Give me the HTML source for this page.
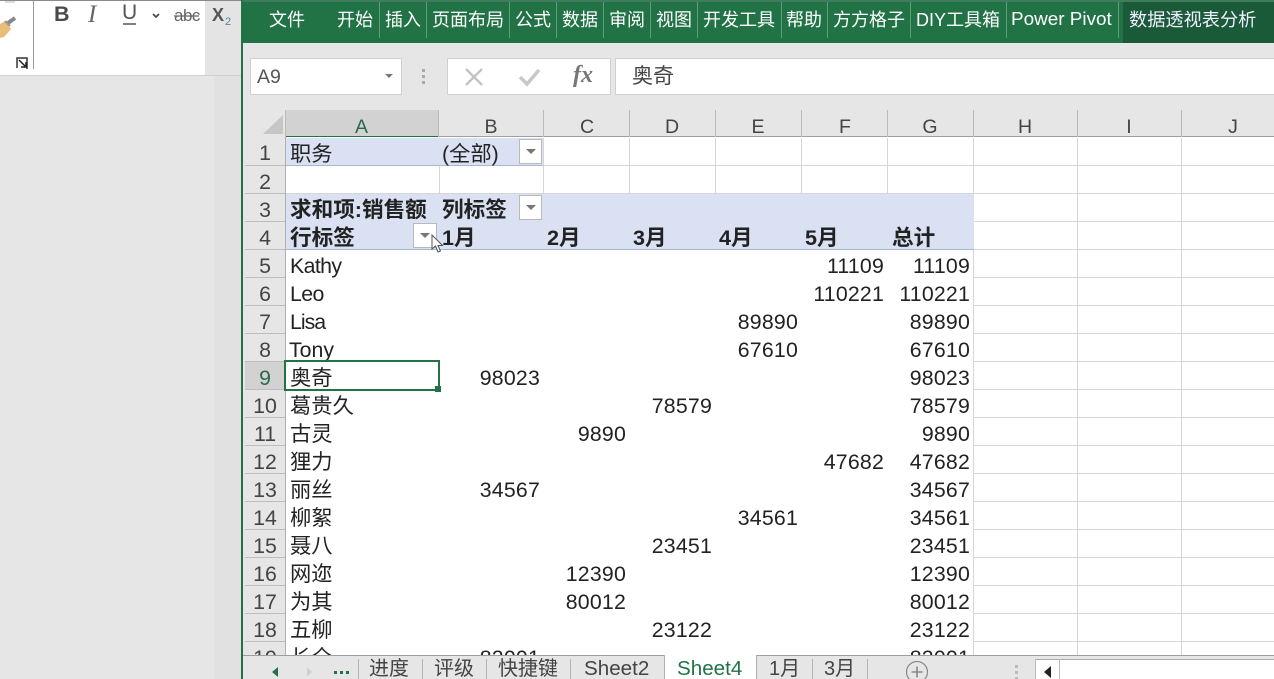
<!DOCTYPE html>
<html lang="zh"><head><meta charset="utf-8"><style>
html,body{margin:0;padding:0;width:1274px;height:679px;overflow:hidden;background:#e6e6e6}
body{position:relative;font-family:"Liberation Sans","Noto Sans CJK SC",sans-serif;color:#333}
div,span{position:absolute;white-space:nowrap}
.t{color:#fff;font-size:18px;line-height:24px;top:8px}
.sep{top:2px;width:1px;height:36px;background:#5f9c7d}
.ch{top:114px;height:26px;line-height:27px;font-size:19.5px;color:#444;text-align:center}
.cs{top:110px;width:1px;height:28px;background:#bbb}
.rh{left:245px;width:40px;height:28px;line-height:31px;margin-top:1px;text-align:center;font-size:21.3px;color:#444}
.rl{left:245px;width:40px;height:1px;background:#bdbdbd}
.c{font-size:21.3px;line-height:28px;height:28px;color:#222;margin-top:-1px}
.n{font-size:21.3px;line-height:28px;height:28px;color:#222;text-align:right;letter-spacing:.2px;margin-top:-1px}
.h{font-weight:bold;font-size:21.6px}
.lat{letter-spacing:-.6px}
.dd{width:23px;height:25px;background:#fff;border:1px solid #b9b9b9;box-sizing:border-box}
.dd:after{content:"";position:absolute;left:6px;top:9px;border:5px solid transparent;border-top:5px solid #777;border-bottom:0}
.tab{top:655px;font-size:20px;line-height:28px;color:#444}
.ts{top:659px;width:1px;height:20px;background:#b5b5b5}
</style></head><body>

<!-- left panel -->
<div style="left:0;top:0;width:205px;height:75px;background:#fff"></div>
<div style="left:205px;top:0;width:37px;height:75px;background:#e4e4e4"></div>
<div style="left:0;top:0;width:242px;height:1px;background:#8a8a8a"></div>
<div style="left:0;top:75px;width:242px;height:1px;background:#d0d0d0"></div>
<div style="left:214px;top:76px;width:28px;height:603px;background:#e1e1e1"></div>
<div style="left:33px;top:1px;width:1px;height:68px;background:#9a9a9a"></div>
<svg style="position:absolute;left:0;top:0" width="242" height="76">
<path d="M5 2H15" stroke="#bbb" stroke-width="1"/>
<path d="M0 24L5 21L11 29L4 37L0 38Z" fill="#e8bd77"/><path d="M5 21L10 26" stroke="#999" stroke-width="2"/>
<path d="M8 23L15 18" stroke="#888" stroke-width="4"/>
<path d="M27 69V58H17V68" fill="none" stroke="#333" stroke-width="1.5"/><path d="M19 60L26 67M26 62V67H21" fill="none" stroke="#222" stroke-width="1.5"/>
<path d="M153 14L156 17L159 14" fill="none" stroke="#444" stroke-width="1.6"/>
<path d="M174 16H199" stroke="#666" stroke-width="1.2"/>
<path d="M123 24H136" stroke="#555" stroke-width="1.5"/>
</svg>
<div style="left:54px;top:0;font:bold 21.5px/29px 'Liberation Sans',sans-serif;color:#4a4a4a">B</div>
<div style="left:88px;top:0;font:italic 25px/29px 'Liberation Serif',serif;color:#666">I</div>
<div style="left:122px;top:0;font:21px/26px 'Liberation Sans',sans-serif;color:#555">U</div>
<div style="left:174px;top:3px;font:17px/26px 'Liberation Sans',sans-serif;color:#666;letter-spacing:-.5px">abc</div>
<div style="left:212px;top:1px;font:bold 18px/28px 'Liberation Sans',sans-serif;color:#555">X</div>
<div style="left:225px;top:12px;font:11px/20px 'Liberation Sans',sans-serif;color:#5b7fa8">2</div>

<!-- window -->
<div style="left:241px;top:0;width:2px;height:679px;background:#217346"></div>
<div style="left:243px;top:1px;width:1031px;height:42px;background:#217346"></div>
<div style="left:243px;top:0;width:1031px;height:2px;background:#3f7d5e"></div>
<div style="left:1123px;top:2px;width:151px;height:41px;background:#1b5a38"></div>
<div class="t" style="left:269px">文件</div>
<div class="t" style="left:337px">开始</div><div class="sep" style="left:379px"></div>
<div class="t" style="left:385px">插入</div><div class="sep" style="left:426px"></div>
<div class="t" style="left:432px">页面布局</div><div class="sep" style="left:509px"></div>
<div class="t" style="left:515px">公式</div><div class="sep" style="left:556px"></div>
<div class="t" style="left:562px">数据</div><div class="sep" style="left:603px"></div>
<div class="t" style="left:609px">审阅</div><div class="sep" style="left:650px"></div>
<div class="t" style="left:656px">视图</div><div class="sep" style="left:697px"></div>
<div class="t" style="left:703px">开发工具</div><div class="sep" style="left:781px"></div>
<div class="t" style="left:786px">帮助</div><div class="sep" style="left:827px"></div>
<div class="t" style="left:833px">方方格子</div>
<div class="sep" style="left:910px"></div>
<div class="t" style="left:916px">DIY工具箱</div><div class="sep" style="left:1006px"></div>
<div class="t" style="left:1011px;font-size:18.9px">Power Pivot</div><div class="sep" style="left:1118px"></div>
<div class="t" style="left:1129px;color:#eef;font-size:18.2px">数据透视表分析</div>

<!-- formula bar -->
<div style="left:250px;top:58px;width:152px;height:37px;background:#fff;border:1px solid #d0d0d0;box-sizing:border-box"></div>
<div style="left:257px;top:64px;font-size:19.5px;line-height:26px;color:#555">A9</div>
<div style="left:385px;top:74px;border:4px solid transparent;border-top:4px solid #777;border-bottom:0"></div>
<div style="left:422px;top:69px;width:3px;height:3px;background:#aaa;box-shadow:0 6px #aaa,0 12px #aaa"></div>
<div style="left:447px;top:58px;width:164px;height:37px;background:#fff;border:1px solid #d0d0d0;box-sizing:border-box"></div>
<svg style="position:absolute;left:447px;top:58px" width="164" height="37">
<path d="M19 11L35 27M35 11L19 27" stroke="#c4c4c4" stroke-width="2.4"/>
<path d="M73 19L80 26L92 12" fill="none" stroke="#c8c8c8" stroke-width="3.5"/>
</svg>
<div style="left:573px;top:62px;font:italic bold 24px/27px 'Liberation Serif',serif;color:#777">fx</div>
<div style="left:615px;top:58px;width:665px;height:37px;background:#fff;border:1px solid #d0d0d0;box-sizing:border-box"></div>
<div style="left:632px;top:63px;font-size:21px;line-height:27px;color:#444">奥奇</div>

<!-- column header -->
<svg style="position:absolute;left:245px;top:110px" width="40" height="28"><path d="M38 5V24H18Z" fill="#c6c6c6"/></svg>
<div style="left:286px;top:110px;width:153px;height:26px;background:#d2d2d2"></div>
<div style="left:286px;top:136px;width:153px;height:2px;background:#217346"></div>
<div style="left:439px;top:136px;width:835px;height:1px;background:#9f9f9f"></div>
<div class="cs" style="left:285px"></div><div class="cs" style="left:438px"></div><div class="cs" style="left:543px"></div><div class="cs" style="left:629px"></div><div class="cs" style="left:715px"></div><div class="cs" style="left:801px"></div><div class="cs" style="left:887px"></div><div class="cs" style="left:973px"></div><div class="cs" style="left:1077px"></div><div class="cs" style="left:1181px"></div>
<div class="ch" style="left:285px;width:153px;color:#2a6a49">A</div>
<div class="ch" style="left:439px;width:104px">B</div><div class="ch" style="left:544px;width:86px">C</div><div class="ch" style="left:629px;width:86px">D</div><div class="ch" style="left:715px;width:86px">E</div><div class="ch" style="left:802px;width:86px">F</div><div class="ch" style="left:887px;width:86px">G</div><div class="ch" style="left:973px;width:104px">H</div><div class="ch" style="left:1077px;width:104px">I</div><div class="ch" style="left:1181px;width:104px">J</div>

<!-- sheet -->
<div style="left:285px;top:137px;width:989px;height:518px;background:#fff"></div>
<div style="left:285px;top:137px;width:1px;height:518px;background:#b0b0b0"></div>
<!-- pivot fills -->
<div style="left:286px;top:138px;width:257px;height:27px;background:#d9e1f2"></div>
<div style="left:286px;top:194px;width:688px;height:55px;background:#d9e1f2"></div>
<div style="left:286px;top:249px;width:688px;height:1px;background:#a9b7d6"></div>
<div style="left:286px;top:165px;width:257px;height:1px;background:#a9b7d6"></div>
<!-- gridlines -->
<svg style="position:absolute;left:0;top:0" width="1274" height="679">
<g stroke="#d6d6d6" stroke-width="1" shape-rendering="crispEdges">
<path d="M439.5 166V193M543.5 138V193M629.5 138V193M715.5 138V193M801.5 138V193M887.5 138V193M973.5 138V193"/>
<path d="M543 165.5H974M286 193.5H974"/>
<path d="M973.5 250V655M1077.5 138V655M1181.5 138V655"/>
<path d="M974 165.5H1274M974 193.5H1274M974 221.5H1274M974 249.5H1274M974 277.5H1274M974 305.5H1274M974 333.5H1274M974 361.5H1274M974 389.5H1274M974 417.5H1274M974 445.5H1274M974 473.5H1274M974 501.5H1274M974 529.5H1274M974 557.5H1274M974 585.5H1274M974 613.5H1274M974 641.5H1274"/>
</g></svg>
<!-- row headers -->
<div class="rh" style="top:137px">1</div><div class="rh" style="top:166px">2</div><div class="rh" style="top:194px">3</div><div class="rh" style="top:222px">4</div><div class="rh" style="top:250px">5</div><div class="rh" style="top:278px">6</div><div class="rh" style="top:306px">7</div><div class="rh" style="top:334px">8</div>
<div style="left:245px;top:362px;width:40px;height:28px;background:#d2d2d2"></div>
<div class="rh" style="top:362px;color:#2a6a49">9</div><div class="rh" style="top:390px">10</div><div class="rh" style="top:418px">11</div><div class="rh" style="top:446px">12</div><div class="rh" style="top:474px">13</div><div class="rh" style="top:502px">14</div><div class="rh" style="top:530px">15</div><div class="rh" style="top:558px">16</div><div class="rh" style="top:586px">17</div><div class="rh" style="top:614px">18</div><div class="rh" style="top:642px">19</div>
<div class="rl" style="top:165px"></div><div class="rl" style="top:193px"></div><div class="rl" style="top:221px"></div><div class="rl" style="top:249px"></div><div class="rl" style="top:277px"></div><div class="rl" style="top:305px"></div><div class="rl" style="top:333px"></div><div class="rl" style="top:361px"></div><div class="rl" style="top:389px"></div><div class="rl" style="top:417px"></div><div class="rl" style="top:445px"></div><div class="rl" style="top:473px"></div><div class="rl" style="top:501px"></div><div class="rl" style="top:529px"></div><div class="rl" style="top:557px"></div><div class="rl" style="top:585px"></div><div class="rl" style="top:613px"></div><div class="rl" style="top:641px"></div>

<!-- cells -->
<div class="c" style="left:290px;top:141px">职务</div>
<div class="c" style="left:442px;top:141px">(全部)</div>
<div class="dd" style="left:519px;top:139px"></div>
<div class="c h" style="left:290px;top:197px">求和项:销售额</div>
<div class="c h" style="left:442px;top:197px">列标签</div>
<div class="dd" style="left:519px;top:195px"></div>
<div class="c h" style="left:290px;top:225px">行标签</div>
<div class="dd" style="left:413px;top:223px;width:24px"></div>
<div class="c h" style="left:442px;top:225px">1月</div><div class="c h" style="left:547px;top:225px">2月</div><div class="c h" style="left:633px;top:225px">3月</div><div class="c h" style="left:719px;top:225px">4月</div><div class="c h" style="left:805px;top:225px">5月</div><div class="c h" style="left:892px;top:225px">总计</div>
<svg style="position:absolute;left:431px;top:234px" width="14" height="20"><path d="M1 1V15L4.500 12L7 18L9.500 17L7 11.500H11.500Z" fill="#fff" stroke="#555" stroke-width="1"/></svg>

<div class="c lat" style="left:290px;top:253px">Kathy</div>
<div class="c lat" style="left:290px;top:281px">Leo</div>
<div class="c lat" style="left:290px;top:309px;letter-spacing:-1px">Lisa</div>
<div class="c" style="left:289px;top:337px">Tony</div>
<div class="c" style="left:290px;top:365px">奥奇</div>
<div class="c" style="left:290px;top:393px">葛贵久</div>
<div class="c" style="left:290px;top:421px">古灵</div>
<div class="c" style="left:290px;top:449px">狸力</div>
<div class="c" style="left:290px;top:477px">丽丝</div>
<div class="c" style="left:290px;top:505px">柳絮</div>
<div class="c" style="left:290px;top:533px">聂八</div>
<div class="c" style="left:290px;top:561px">网迩</div>
<div class="c" style="left:290px;top:589px">为其</div>
<div class="c" style="left:290px;top:617px">五柳</div>
<div class="c" style="left:290px;top:645px">长全</div>

<div class="n" style="right:390px;top:253px">11109</div><div class="n" style="right:304px;top:253px">11109</div>
<div class="n" style="right:390px;top:281px">110221</div><div class="n" style="right:304px;top:281px">110221</div>
<div class="n" style="right:476px;top:309px">89890</div><div class="n" style="right:304px;top:309px">89890</div>
<div class="n" style="right:476px;top:337px">67610</div><div class="n" style="right:304px;top:337px">67610</div>
<div class="n" style="right:734px;top:365px">98023</div><div class="n" style="right:304px;top:365px">98023</div>
<div class="n" style="right:562px;top:393px">78579</div><div class="n" style="right:304px;top:393px">78579</div>
<div class="n" style="right:648px;top:421px">9890</div><div class="n" style="right:304px;top:421px">9890</div>
<div class="n" style="right:390px;top:449px">47682</div><div class="n" style="right:304px;top:449px">47682</div>
<div class="n" style="right:734px;top:477px">34567</div><div class="n" style="right:304px;top:477px">34567</div>
<div class="n" style="right:476px;top:505px">34561</div><div class="n" style="right:304px;top:505px">34561</div>
<div class="n" style="right:562px;top:533px">23451</div><div class="n" style="right:304px;top:533px">23451</div>
<div class="n" style="right:648px;top:561px">12390</div><div class="n" style="right:304px;top:561px">12390</div>
<div class="n" style="right:648px;top:589px">80012</div><div class="n" style="right:304px;top:589px">80012</div>
<div class="n" style="right:562px;top:617px">23122</div><div class="n" style="right:304px;top:617px">23122</div>
<div class="n" style="right:734px;top:645px">82001</div><div class="n" style="right:304px;top:645px">82001</div>

<!-- selection -->
<div style="left:284px;top:360px;width:156px;height:31px;border:2px solid #217346;box-sizing:border-box"></div>
<div style="left:435px;top:386px;width:6px;height:6px;background:#217346"></div>

<!-- tab bar -->
<div style="left:243px;top:655px;width:1031px;height:24px;background:#e6e6e6;border-top:1px solid #9f9f9f;box-sizing:border-box"></div>
<div style="left:664px;top:655px;width:93px;height:24px;background:#fff;border-left:1px solid #b0b0b0;border-right:1px solid #b0b0b0;box-sizing:border-box"></div>
<svg style="position:absolute;left:243px;top:655px" width="130" height="24"><path d="M29 17L35 12V22Z" fill="#217346"/><path d="M64 12L69 17L64 22Z" fill="#d0d0d0"/><path d="M91 16h3v3h-3zM97 16h3v3h-3zM103 16h3v3h-3z" fill="#217346"/></svg>
<div class="ts" style="left:358px"></div><div class="ts" style="left:422px"></div><div class="ts" style="left:486px"></div><div class="ts" style="left:570px"></div><div class="ts" style="left:812px"></div><div class="ts" style="left:867px"></div>
<div class="tab" style="left:369px">进度</div>
<div class="tab" style="left:434px">评级</div>
<div class="tab" style="left:498px">快捷键</div>
<div class="tab" style="left:584px;font-size:20.6px">Sheet2</div>
<div class="tab" style="left:677px;color:#217346;font-size:20.6px">Sheet4</div>
<div class="tab" style="left:769px">1月</div>
<div class="tab" style="left:824px">3月</div>
<svg style="position:absolute;left:900px;top:655px" width="32" height="24"><circle cx="17" cy="17" r="10.500" fill="none" stroke="#888" stroke-width="1.2"/><path d="M11.500 17H22.500M17 11.500V22.500" stroke="#888" stroke-width="1.6"/></svg>
<div style="left:1015px;top:665px;width:3px;height:3px;background:#bbb;box-shadow:0 6px #bbb,0 12px #bbb"></div>
<div style="left:1035px;top:659px;width:239px;height:20px;background:#fff;border-top:1px solid #aaa;box-sizing:border-box"></div>
<div style="left:1035px;top:659px;width:1px;height:20px;background:#bbb"></div>
<div style="left:1059px;top:659px;width:1px;height:20px;background:#bbb"></div>
<svg style="position:absolute;left:1036px;top:660px" width="23" height="19"><path d="M15 6V18L8 12Z" fill="#222"/></svg>
</body></html>
